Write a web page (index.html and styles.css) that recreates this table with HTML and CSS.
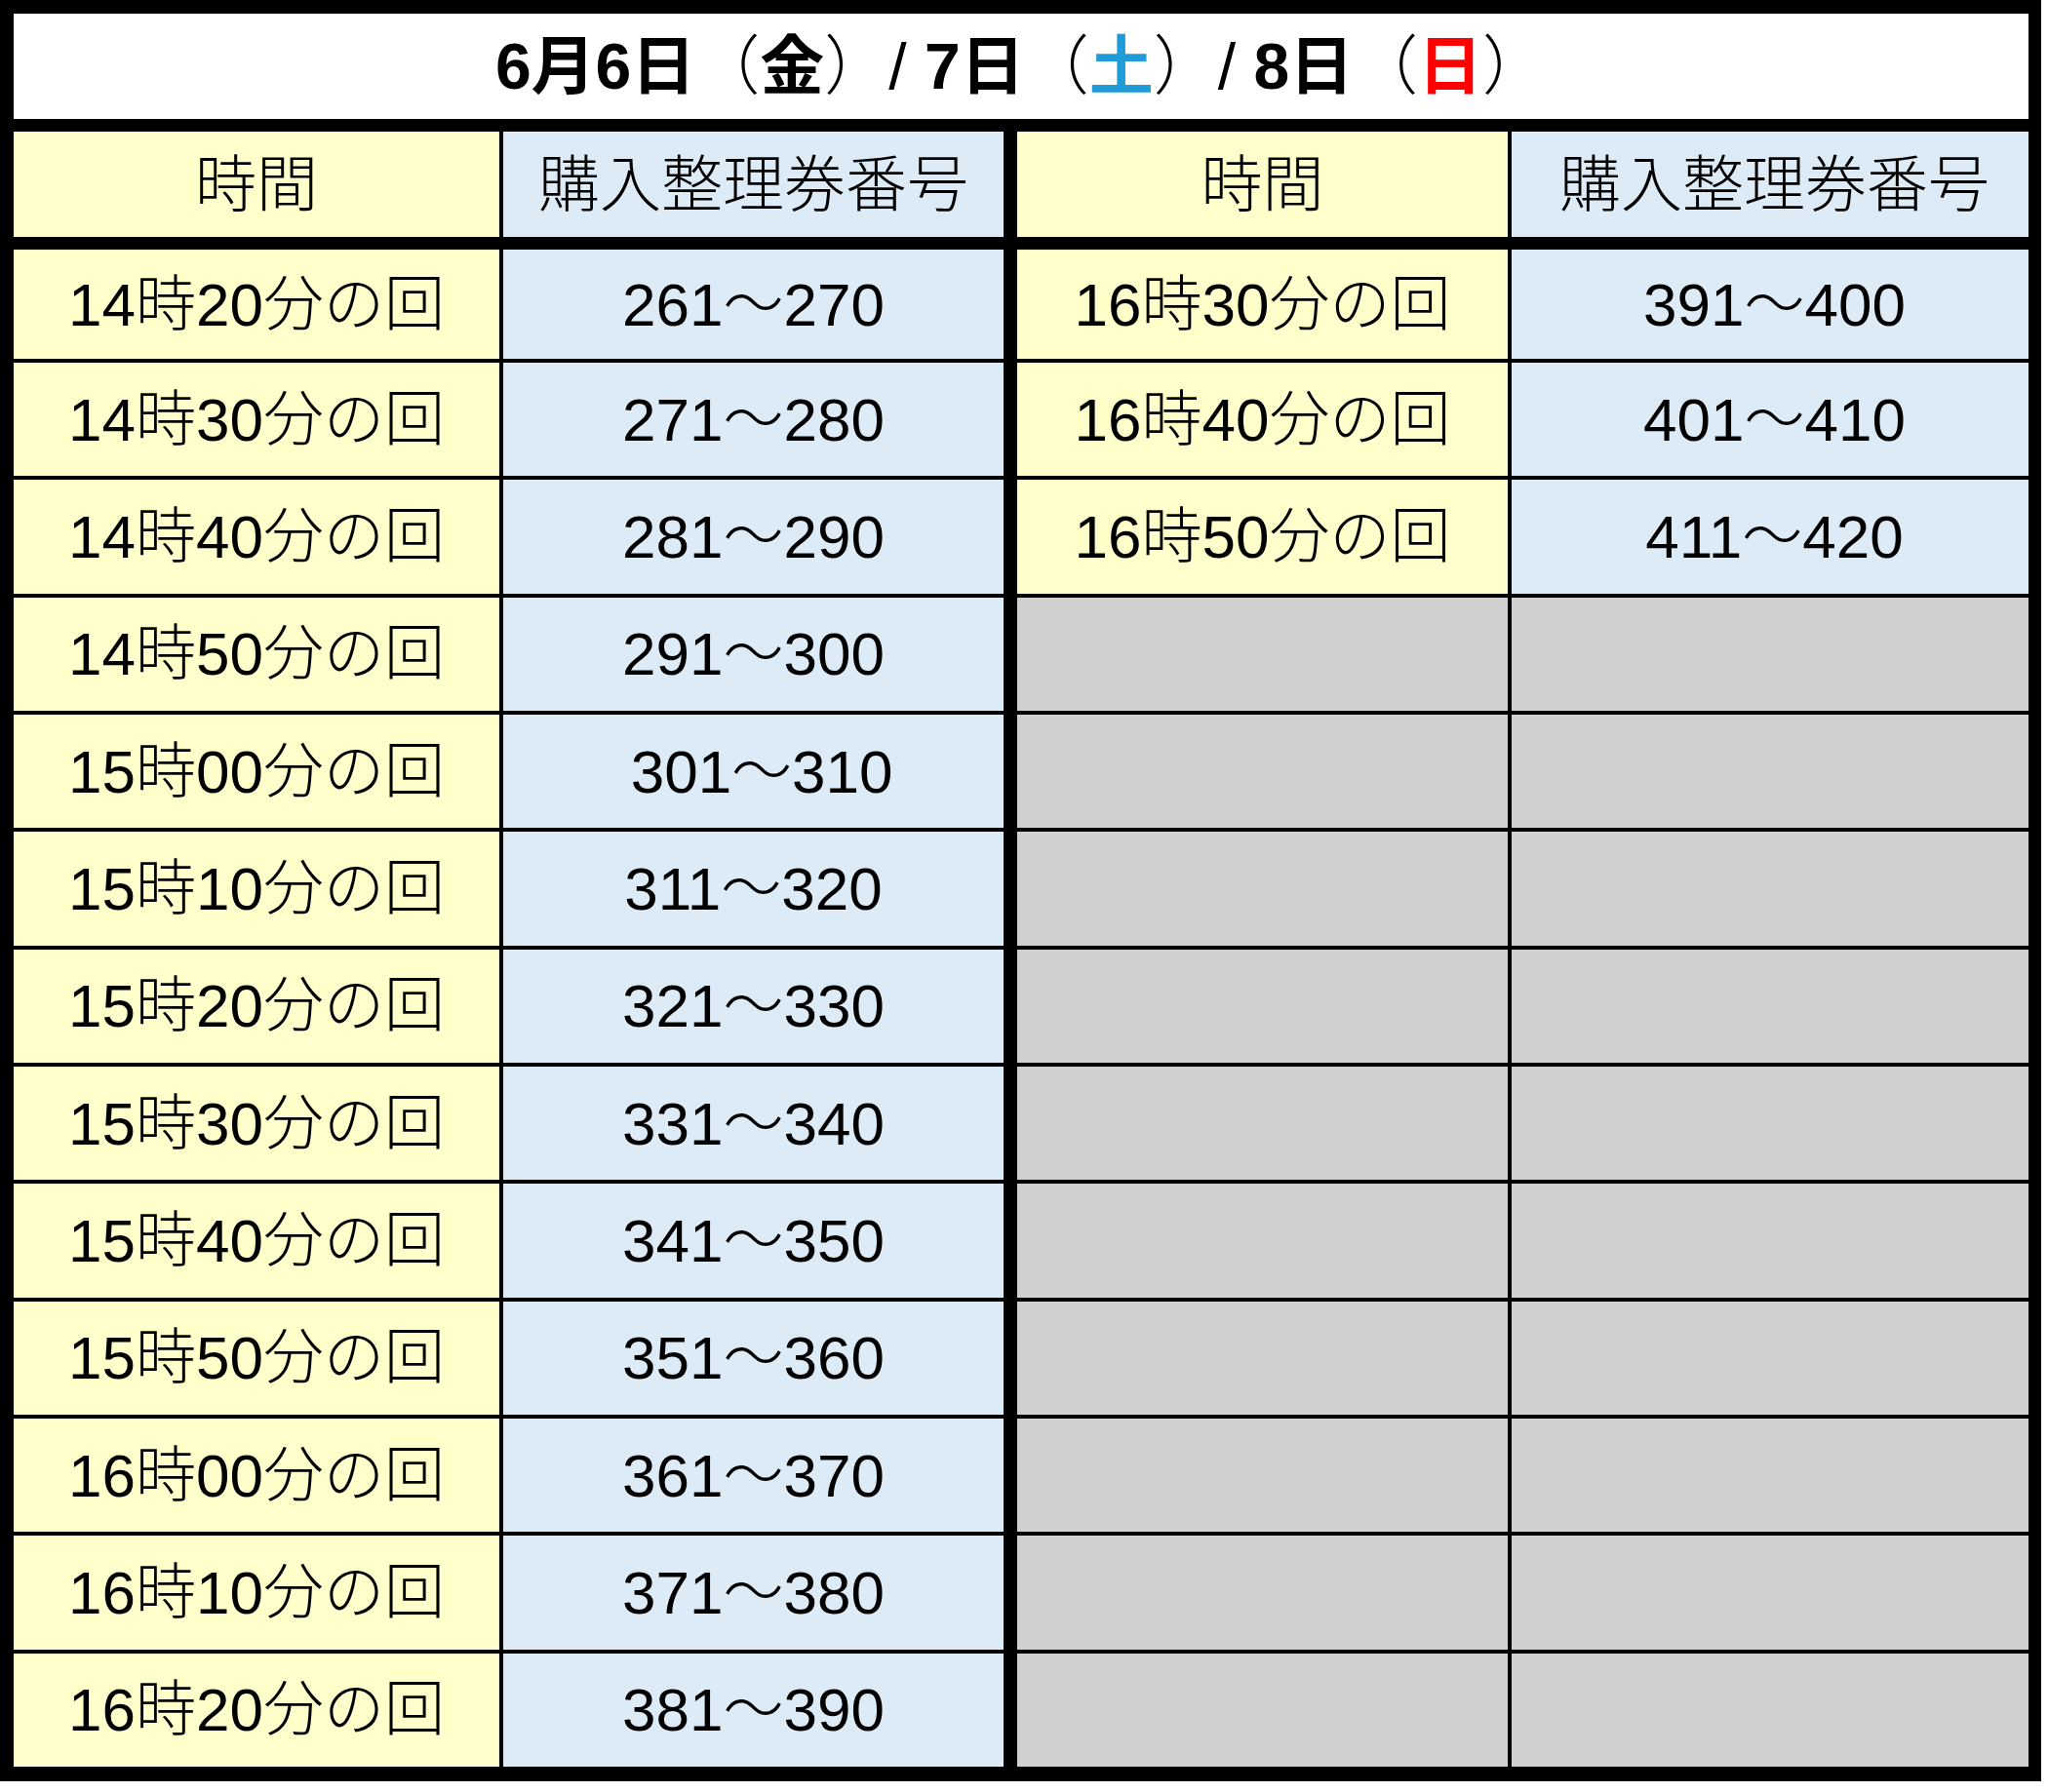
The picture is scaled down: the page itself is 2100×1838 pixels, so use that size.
FILE: index.html
```html
<!DOCTYPE html>
<html lang="ja">
<head>
<meta charset="utf-8">
<title>購入整理券番号</title>
<link rel="stylesheet" href="styles.css">
</head>
<body>
<div class="sheet">
  <div class="title">6月6日<span class="p">（</span>金<span class="p">）/ </span>7日<span class="p">（</span><span class="sat">土</span><span class="p">）/ </span>8日<span class="p">（</span><span class="sun">日</span><span class="p">）</span></div>
  <div class="grid head">
    <div class="cell c1 y">時間</div>
    <div class="cell c2 b">購入整理券番号</div>
    <div class="cell c3 y">時間</div>
    <div class="cell c4 b">購入整理券番号</div>
  </div>
  <div class="grid body">
    <div class="cell c1 y">14時20分の回</div><div class="cell c2 b">261～270</div><div class="cell c3 y">16時30分の回</div><div class="cell c4 b">391～400</div>
    <div class="cell c1 y">14時30分の回</div><div class="cell c2 b">271～280</div><div class="cell c3 y">16時40分の回</div><div class="cell c4 b">401～410</div>
    <div class="cell c1 y">14時40分の回</div><div class="cell c2 b">281～290</div><div class="cell c3 y">16時50分の回</div><div class="cell c4 b">411～420</div>
    <div class="cell c1 y">14時50分の回</div><div class="cell c2 b">291～300</div><div class="cell c3 g"></div><div class="cell c4 g"></div>
    <div class="cell c1 y">15時00分の回</div><div class="cell c2 b">&nbsp;301～310</div><div class="cell c3 g"></div><div class="cell c4 g"></div>
    <div class="cell c1 y">15時10分の回</div><div class="cell c2 b">311～320</div><div class="cell c3 g"></div><div class="cell c4 g"></div>
    <div class="cell c1 y">15時20分の回</div><div class="cell c2 b">321～330</div><div class="cell c3 g"></div><div class="cell c4 g"></div>
    <div class="cell c1 y">15時30分の回</div><div class="cell c2 b">331～340</div><div class="cell c3 g"></div><div class="cell c4 g"></div>
    <div class="cell c1 y">15時40分の回</div><div class="cell c2 b">341～350</div><div class="cell c3 g"></div><div class="cell c4 g"></div>
    <div class="cell c1 y">15時50分の回</div><div class="cell c2 b">351～360</div><div class="cell c3 g"></div><div class="cell c4 g"></div>
    <div class="cell c1 y">16時00分の回</div><div class="cell c2 b">361～370</div><div class="cell c3 g"></div><div class="cell c4 g"></div>
    <div class="cell c1 y">16時10分の回</div><div class="cell c2 b">371～380</div><div class="cell c3 g"></div><div class="cell c4 g"></div>
    <div class="cell c1 y">16時20分の回</div><div class="cell c2 b">381～390</div><div class="cell c3 g"></div><div class="cell c4 g"></div>
  </div>
</div>
</body>
</html>
```
FILE: styles.css
```css
html, body {
  margin: 0;
  padding: 0;
  background: #ffffff;
}

body {
  font-family: "Liberation Sans", "Noto Sans CJK JP", sans-serif;
  color: #000000;
}

.sheet {
  width: 2066px;
  background: #000000;
  padding: 14px 13px 15px 14px;
  display: flex;
  flex-direction: column;
  gap: 13px;
}

.title {
  height: 108px;
  background: #ffffff;
  display: flex;
  align-items: center;
  justify-content: center;
  font-size: 66px;
  font-weight: bold;
  white-space: pre;
  padding-bottom: 12px;
  box-sizing: border-box;
}

.title .p {
  font-weight: 300;
}

.title .sat {
  color: #1f9bd8;
}

.title .sun {
  color: #ff0000;
}

.grid {
  display: grid;
  grid-template-columns: 502px 527px 507px 530px;
}

.head {
  grid-template-rows: 108px;
}

.body {
  grid-template-rows: 112px repeat(12, 116.33px);
  row-gap: 4px;
}

.cell {
  display: flex;
  align-items: center;
  justify-content: center;
  font-size: 62px;
  font-weight: 300;
  white-space: pre;
  padding-bottom: 11px;
  box-sizing: border-box;
}

.head .cell {
  font-size: 63px;
}

.c1 {
  border-right: 4px solid #000000;
}

.c2 {
  border-right: 14px solid #000000;
}

.c3 {
  border-right: 4px solid #000000;
}

.c4 {
  padding-left: 9px;
}

.y {
  background: #ffffcc;
}

.b {
  background: #ddebf7;
}

.g {
  background: #d0d0d0;
}
```
